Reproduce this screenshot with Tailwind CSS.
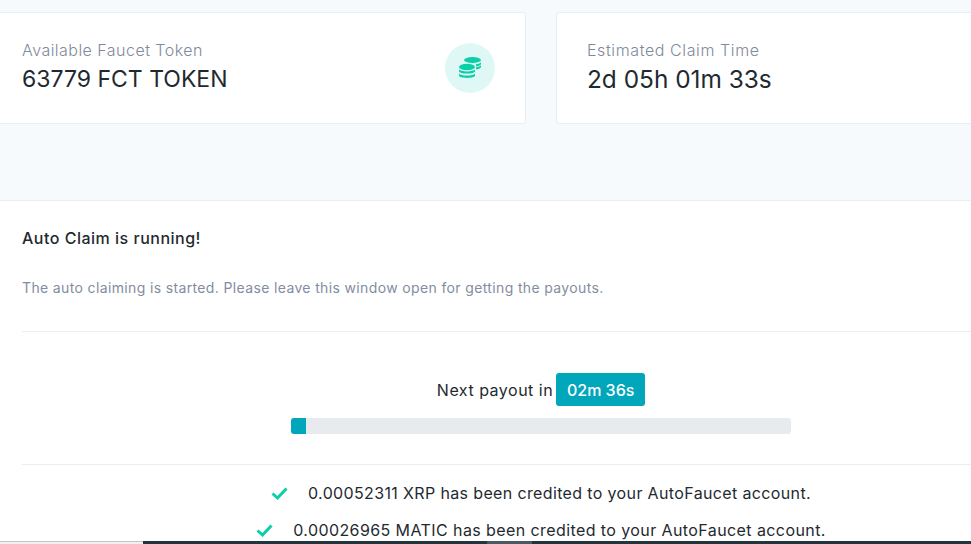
<!DOCTYPE html>
<html lang="en">
<head>
  <meta charset="UTF-8">
  <title>Auto Claim</title>
  <script src="https://cdn.jsdelivr.net/npm/@tailwindcss/browser@4"></script>
</head>
<body class="bg-[#f7fafd] h-[544px] w-[971px] overflow-hidden relative font-['Inter','Liberation_Sans',sans-serif] text-[#1f2a30]">
  <div class="pt-3 flex gap-[30px] h-[200px] items-start">
    <div class="w-[526px] h-[112px] bg-white border border-l-0 border-[#e9edf4] rounded-r-[3px] pl-[22px] pr-[30px] flex items-center justify-between">
      <div class="self-start pt-[27px]">
        <p class="text-[16px] leading-[20px] tracking-[0.47px] text-[#808a9c] font-light">Available Faucet Token</p>
        <p class="mt-px text-[23px] leading-[36px]">63779 FCT TOKEN</p>
      </div>
      <div class="w-[50px] h-[50px] rounded-full bg-[#e0f8f5] flex items-center justify-center">
        <svg width="22" height="22" viewBox="0 0 22 22" fill="#0acfa9">
          <ellipse cx="13.500" cy="3" rx="8.500" ry="3"/>
          <path d="M17 7.200c2.500-.3 4.300-1.100 5-2v1.900c0 1-2 1.900-5 2.300zM17 10.200c2.500-.3 4.300-1.100 5-2v1.900c0 1-2 1.900-5 2.300z"/>
          <ellipse cx="8" cy="10" rx="8" ry="3.200"/>
          <path d="M0 12.200c1 1.300 4 2.200 8 2.200s7-.9 8-2.200v2c0 1.400-3.600 2.400-8 2.400s-8-1-8-2.400zM0 16.400c1 1.300 4 2.200 8 2.200s7-.9 8-2.200v2.200c0 1.400-3.600 2.400-8 2.400s-8-1-8-2.400z"/>
        </svg>
      </div>
    </div>
    <div class="flex-1 h-[112px] bg-white border border-r-0 border-[#e9edf4] rounded-l-[3px] pl-[30px] pt-[27px]">
      <p class="text-[16px] leading-[20px] tracking-[0.6px] text-[#808a9c] font-light">Estimated Claim Time</p>
      <p class="mt-px text-[24.4px] leading-[36px]">2d 05h 01m 33s</p>
    </div>
  </div>

  <div class="bg-white border-t border-[#e9edf4] h-[344px] pl-[22px]">
    <div class="h-[131px] border-b border-[#e9edf4] pt-[27px]">
      <p class="text-[16px] leading-[20px] tracking-[0.5px] font-[450]">Auto Claim is running!</p>
      <p class="mt-[30px] text-[14px] leading-[20px] tracking-[0.36px] text-[#838d9f]">The auto claiming is started. Please leave this window open for getting the payouts.</p>
    </div>
    <div class="h-[132px] pl-[89px] pt-[41px] flex flex-col items-center">
      <div class="flex items-center gap-[3px] h-[33px]">
        <span class="text-[16px] tracking-[0.5px]">Next payout in</span>
        <span class="bg-[#00a7bb] text-white text-[16px] font-medium rounded-[3px] h-[33px] w-[89px] flex items-center justify-center">02m 36s</span>
      </div>
      <div class="w-[500px] h-4 mt-3 bg-[#e8ebee] rounded-[3px] overflow-hidden">
        <div class="w-[15px] h-4 bg-[#00a7bb]"></div>
      </div>
    </div>
    <div class="border-t border-[#e9edf4] pl-[89px] flex flex-col items-center pt-[18px] gap-[17px] text-[16px] leading-[20px]">
      <p class="flex items-center gap-[20px] tracking-[0.36px]">
        <svg width="17" height="13" viewBox="0 0 17 13" fill="none" stroke="#0acfa9" stroke-width="3"><path d="M1.500 6.500l5 4.500 9-9.500"/></svg>
        <span>0.00052311 XRP has been credited to your AutoFaucet account.</span>
      </p>
      <p class="flex items-center gap-[20px] tracking-[0.41px]">
        <svg width="17" height="13" viewBox="0 0 17 13" fill="none" stroke="#0acfa9" stroke-width="3"><path d="M1.500 6.500l5 4.500 9-9.500"/></svg>
        <span>0.00026965 MATIC has been credited to your AutoFaucet account.</span>
      </p>
    </div>
  </div>

  <div class="absolute left-0 bottom-0 w-[143px] h-[3px] bg-[#f0f0f0] border-t border-[#c4c6c6]"></div>
  <div class="absolute left-[143px] right-0 bottom-0 h-[3px] bg-[#22343c]"></div>
  <div class="absolute left-[487px] w-[45px] bottom-0 h-[3px] bg-[#4a5a62]"></div>
</body>
</html>
